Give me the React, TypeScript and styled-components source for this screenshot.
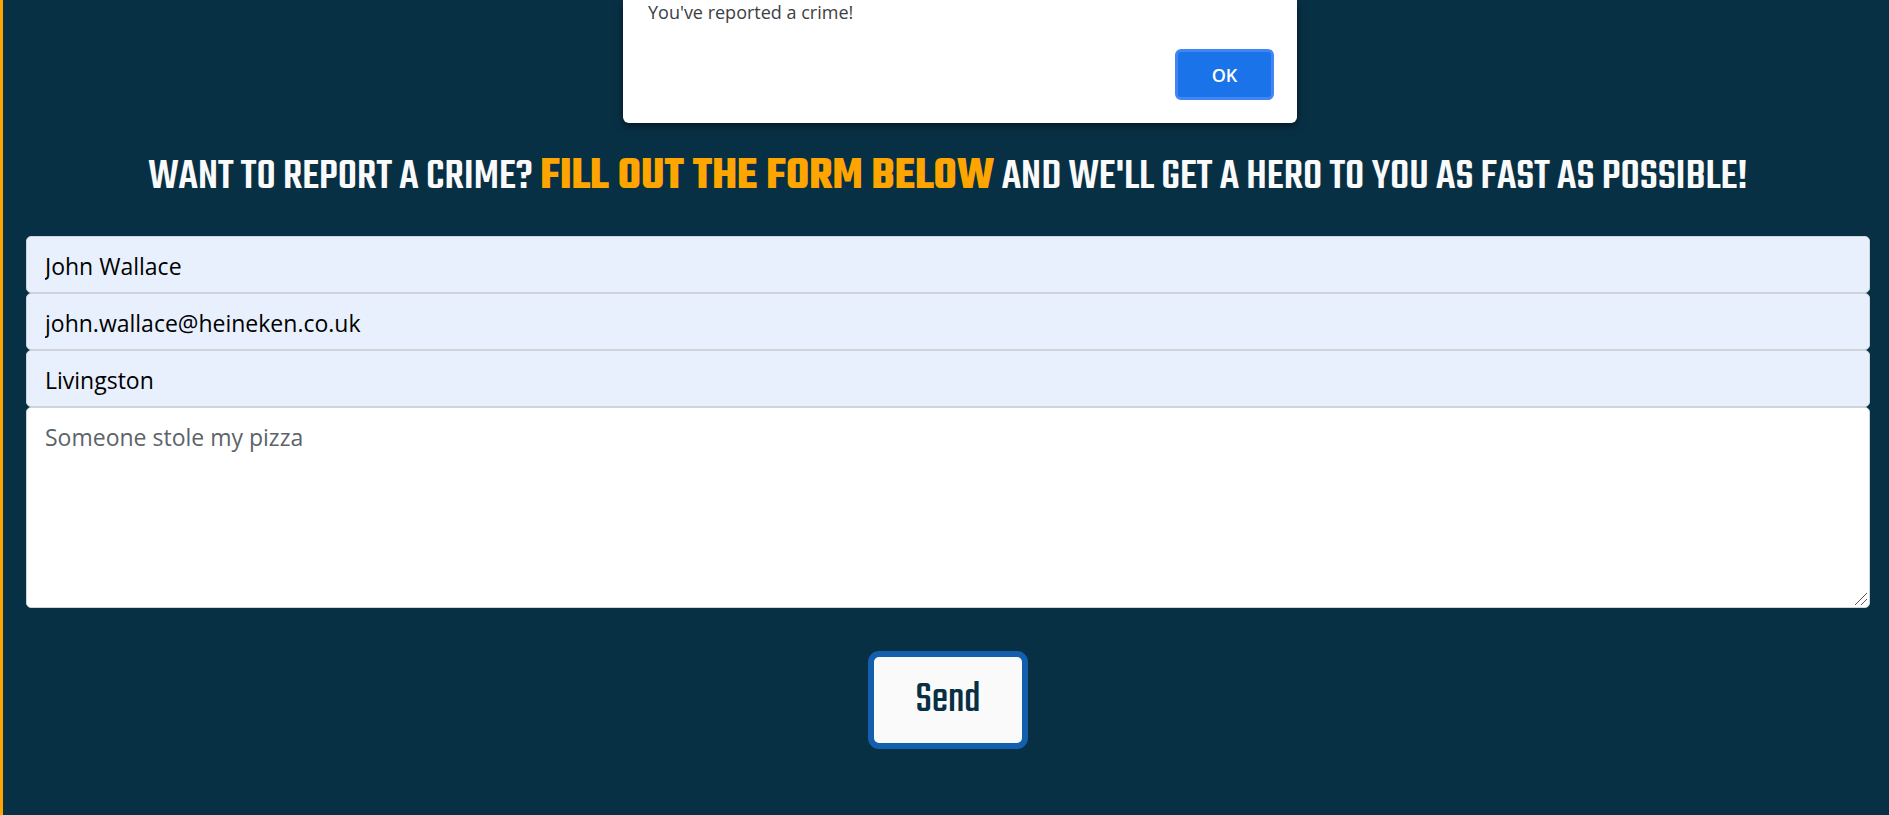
import React from 'react';
import styled, { createGlobalStyle } from 'styled-components';

const display = `Teko, 'Liberation Sans Narrow', sans-serif`;
const body = `'Segoe UI', 'Open Sans', 'Noto Sans', sans-serif`;

const GlobalStyle = createGlobalStyle`
  *, *::before, *::after { box-sizing: border-box; }
  body { margin: 0; background: #083045; font-family: ${body}; }
`;

const Page = styled.main`
  position: relative;
  min-height: 100vh;
  padding: 150px 19px 48px 23px;
  border-left: 3px solid #ffa500;
  background: #083045;
`;

const Heading = styled.h1`
  margin: 0 0 32px;
  color: #fafafa;
  font: 500 45px/54px ${display};
  text-align: center;
  text-transform: uppercase;
`;

const Highlight = styled.strong`
  color: #ffa500;
  font-weight: 700;
`;

const Form = styled.form`
  display: flex;
  flex-direction: column;
  align-items: center;
`;

const Field = styled.input`
  width: 100%;
  height: 57px;
  padding: 2px 18px 0;
  border: 1px solid #ced4da;
  border-radius: 5px;
  outline: none;
  background: #e8f0fe;
  color: #000;
  font: 400 23px/36px ${body};
`;

const MessageBox = styled.div`
  position: relative;
  width: 100%;
`;

const Message = styled.textarea`
  display: block;
  width: 100%;
  height: 201px;
  padding: 11px 18px;
  border: 1px solid #ced4da;
  border-radius: 5px;
  outline: none;
  background: #fff;
  font: 400 23px/36px ${body};
  resize: vertical;

  &::placeholder { color: #5c636a; opacity: 1; }
  &::-webkit-resizer { background: transparent; }
`;

const Grip = styled.svg`
  position: absolute;
  right: 2px;
  bottom: 2px;
  pointer-events: none;
`;

const SendButton = styled.button`
  margin-top: 43px;
  height: 98px;
  min-width: 160px;
  padding: 0;
  border: 6px solid #135fad;
  border-radius: 11px;
  background: #fafafa;
  color: #083045;
  font: 400 45px/54px ${display};
`;

const Alert = styled.div`
  position: absolute;
  top: 0;
  left: calc(50% + 14px);
  width: 674px;
  max-width: 90%;
  transform: translateX(-50%);
  display: flex;
  flex-direction: column;
  padding: 0 23px 23px 25px;
  border-radius: 0 0 6px 6px;
  background: #fff;
  box-shadow: 0 3px 8px rgba(0, 0, 0, 0.5);
`;

const AlertText = styled.p`
  margin: 0 0 25px;
  color: #3c4043;
  font-size: 18px;
  line-height: 24px;
`;

const OkButton = styled.button`
  align-self: flex-end;
  width: 99px;
  height: 51px;
  padding: 0;
  border: 3px solid #4285f4;
  border-radius: 6px;
  background: #1a73e8;
  color: #fff;
  font: 600 18px/24px ${body};
`;

export default function App() {
  return (
    <>
      <GlobalStyle />
      <Page>
        <Heading>
          Want to report a crime? <Highlight>Fill out the form below</Highlight> and we'll get a hero to you as fast as possible!
        </Heading>
        <Form onSubmit={(event: React.FormEvent) => event.preventDefault()}>
          <Field type="text" name="name" aria-label="Name" defaultValue="John Wallace" />
          <Field type="email" name="email" aria-label="Email" defaultValue="john.wallace@heineken.co.uk" />
          <Field type="text" name="city" aria-label="City" defaultValue="Livingston" />
          <MessageBox>
            <Message name="crime" aria-label="Crime" placeholder="Someone stole my pizza" />
            <Grip width="14" height="14" viewBox="0 0 14 14" fill="none" stroke="#555" aria-hidden="true">
              <path d="M1 13 13 1M7 13l6-6" />
            </Grip>
          </MessageBox>
          <SendButton type="submit">Send</SendButton>
        </Form>
        <Alert role="alertdialog" aria-describedby="alert-text">
          <AlertText id="alert-text">You've reported a crime!</AlertText>
          <OkButton type="button">OK</OkButton>
        </Alert>
      </Page>
    </>
  );
}
